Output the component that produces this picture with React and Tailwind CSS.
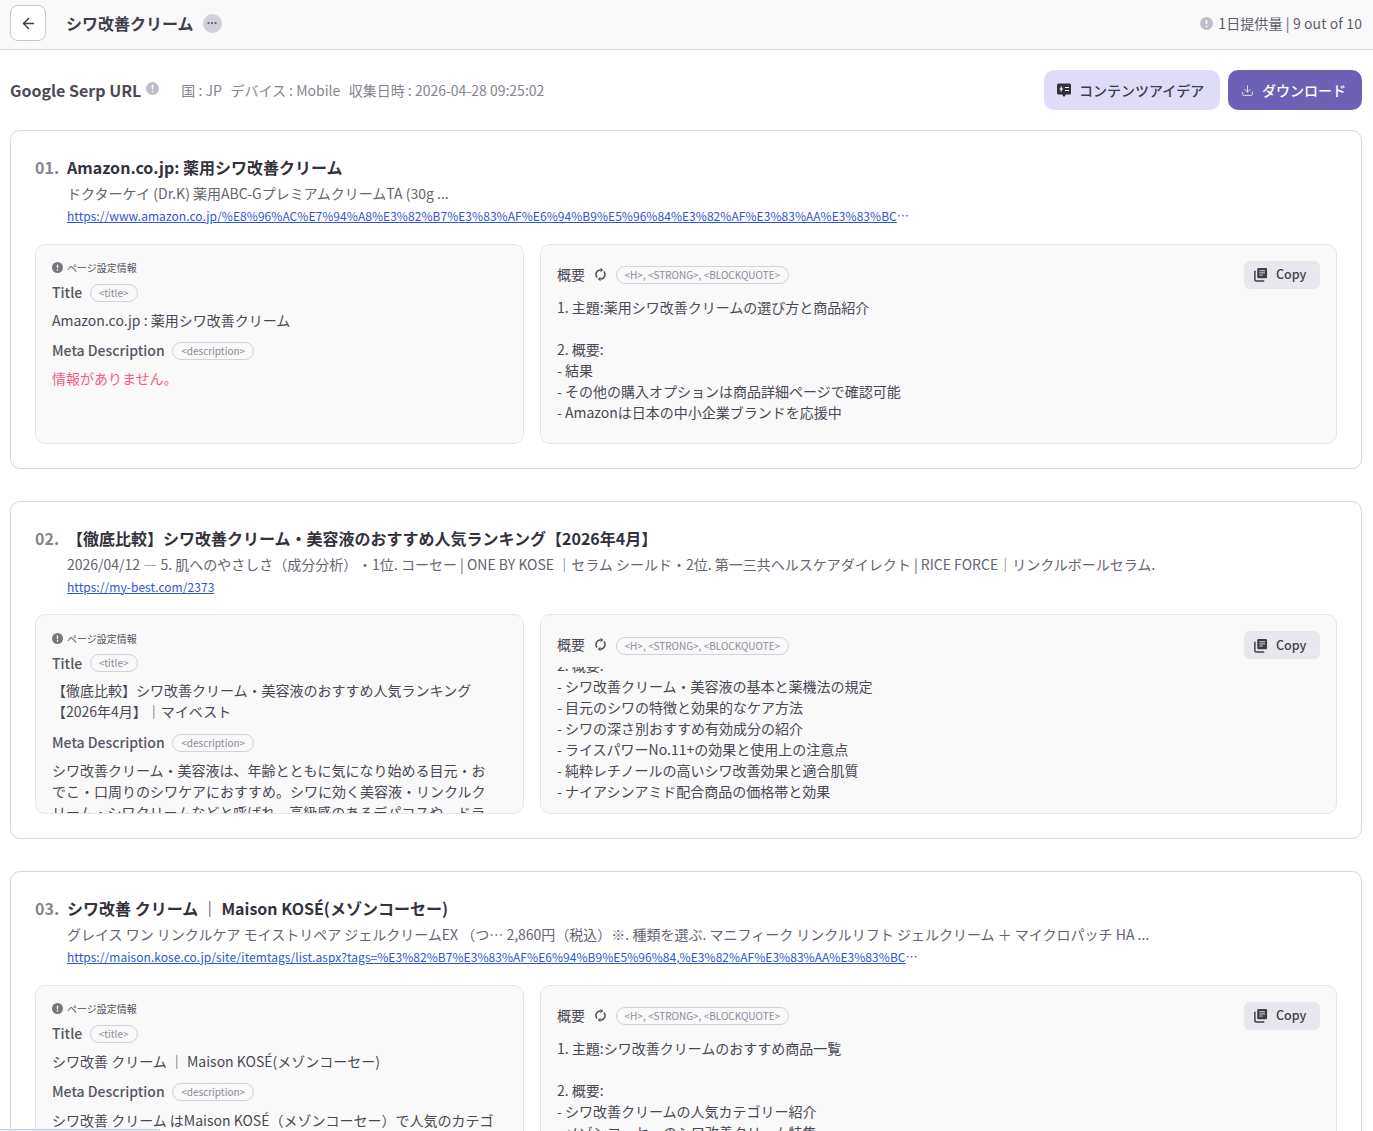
import { ArrowLeft, Download, Ellipsis } from "lucide-react";

const results = [
  {
    no: "01.",
    title: "Amazon.co.jp: 薬用シワ改善クリーム",
    snippet: "ドクターケイ (Dr.K) 薬用ABC-GプレミアムクリームTA (30g ...",
    url: "https://www.amazon.co.jp/%E8%96%AC%E7%94%A8%E3%82%B7%E3%83%AF%E6%94%B9%E5%96%84%E3%82%AF%E3%83%AA%E3%83%BC%E3%83%A0/s?k=%E8%96%AC%E7%94%A8",
    urlWidth: "max-w-[843px]",
    metaTitle: ["Amazon.co.jp : 薬用シワ改善クリーム"],
    description: null,
    summaryOffset: "mt-0",
    summary: ["1. 主題:薬用シワ改善クリームの選び方と商品紹介", "", "2. 概要:", "- 結果", "- その他の購入オプションは商品詳細ページで確認可能", "- Amazonは日本の中小企業ブランドを応援中"],
  },
  {
    no: "02.",
    title: "【徹底比較】シワ改善クリーム・美容液のおすすめ人気ランキング【2026年4月】",
    snippet: "2026/04/12 ― 5. 肌へのやさしさ（成分分析）\u200a・1位. コーセー | ONE BY KOSE ｜セラム シールド・2位. 第一三共ヘルスケアダイレクト | RICE FORCE｜リンクルボールセラム.",
    url: "https://my-best.com/2373",
    urlWidth: "max-w-[843px]",
    metaTitle: ["【徹底比較】シワ改善クリーム・美容液のおすすめ人気ランキング", "【2026年4月】｜マイベスト"],
    description: "シワ改善クリーム・美容液は、年齢とともに気になり始める目元・おでこ・口周りのシワケアにおすすめ。シワに効く美容液・リンクルクリーム・シワクリームなどと呼ばれ、高級感のあるデパコスや、ドラ",
    summaryOffset: "-mt-[12px]",
    summary: ["2. 概要:", "- シワ改善クリーム・美容液の基本と薬機法の規定", "- 目元のシワの特徴と効果的なケア方法", "- シワの深さ別おすすめ有効成分の紹介", "- ライスパワーNo.11+の効果と使用上の注意点", "- 純粋レチノールの高いシワ改善効果と適合肌質", "- ナイアシンアミド配合商品の価格帯と効果"],
  },
  {
    no: "03.",
    title: "シワ改善 クリーム ｜ Maison KOSÉ(メゾンコーセー)",
    snippet: "グレイス ワン リンクルケア モイストリペア ジェルクリームEX （つ⋯ 2,860円（税込）※. 種類を選ぶ. マニフィーク リンクルリフト ジェルクリーム ＋ マイクロパッチ HA ...",
    url: "https://maison.kose.co.jp/site/itemtags/list.aspx?tags=%E3%82%B7%E3%83%AF%E6%94%B9%E5%96%84,%E3%82%AF%E3%83%AA%E3%83%BC%E3%83%A0%E3%83%A0",
    urlWidth: "max-w-[852px]",
    metaTitle: ["シワ改善 クリーム ｜ Maison KOSÉ(メゾンコーセー)"],
    description: "シワ改善 クリーム はMaison KOSÉ（メゾンコーセー）で人気のカテゴリーです。",
    summaryOffset: "mt-0",
    summary: ["1. 主題:シワ改善クリームのおすすめ商品一覧", "", "2. 概要:", "- シワ改善クリームの人気カテゴリー紹介", "- メゾンコーセーのシワ改善クリーム特集"],
  },
];

function AlertDot({ className }) {
  return (
    <svg viewBox="0 0 16 16" className={className}>
      <circle cx="8" cy="8" r="8" fill="currentColor" />
      <rect x="7" y="3.5" width="2" height="5.5" rx="1" fill="#fff" />
      <circle cx="8" cy="11.5" r="1.15" fill="#fff" />
    </svg>
  );
}

function SyncIcon() {
  return (
    <svg viewBox="0 0 16 16" className="ml-[8px] mt-[3px] h-[15px] w-[15px] shrink-0 text-[#55545f]" fill="none">
      <path d="M8 3.2a4.8 4.8 0 0 0-3.6 8" stroke="currentColor" strokeWidth="1.6" />
      <path d="M8 .8v4.8l3-2.4z" fill="currentColor" />
      <path d="M8 12.8a4.8 4.8 0 0 0 3.6-8" stroke="currentColor" strokeWidth="1.6" />
      <path d="M8 10.4v4.8l-3-2.4z" fill="currentColor" />
    </svg>
  );
}

function TagPill({ children, className = "" }) {
  return (
    <span className={`ml-[7.5px] inline-flex h-[18px] items-center rounded-full border border-[#d3d1de] px-2 text-[10px] font-normal leading-none text-[#8b8a99] ${className}`}>
      {children}
    </span>
  );
}

function MetaPanel({ item }) {
  return (
    <div className="h-[200px] overflow-hidden rounded-[10px] border border-[#e6e5ec] bg-[#f9f9fa] px-4 pt-[16px]">
      <div className="flex h-[14px] items-center gap-1 text-[10px] text-[#55545f]">
        <AlertDot className="h-[11px] w-[11px] text-[#77767f]" />
        <span>ページ設定情報</span>
      </div>
      <div className="mt-[7px] flex h-[21px] items-center text-sm font-medium text-[#565562]">
        Title<TagPill className="mt-[1px]">&lt;title&gt;</TagPill>
      </div>
      <div className="mt-[7px] text-sm leading-[21px] text-[#494853]">
        {item.metaTitle.map((line) => (
          <div key={line}>{line}</div>
        ))}
      </div>
      <div className="mt-[9px] flex h-[21px] items-center text-sm font-medium text-[#565562]">
        Meta Description<TagPill className="mt-[2px]">&lt;description&gt;</TagPill>
      </div>
      {item.description ? (
        <p className="mt-[8px] w-[442px] text-sm leading-[21px] text-[#494853]">{item.description}</p>
      ) : (
        <p className="mt-[7px] text-sm leading-[21px] text-[#f2617f]">情報がありません。</p>
      )}
    </div>
  );
}

function SummaryPanel({ item }) {
  return (
    <div className="relative flex h-[200px] flex-col overflow-hidden rounded-[10px] border border-[#e6e5ec] bg-[#f9f9fa] pl-4 pr-4">
      <div className="flex h-[52px] shrink-0 items-start pt-[19px]">
        <span className="text-sm leading-[21px] text-[#494853]">概要</span>
        <SyncIcon />
        <span className="mt-[1px] flex h-[21px] items-center">
          <TagPill>&lt;H&gt;, &lt;STRONG&gt;, &lt;BLOCKQUOTE&gt;</TagPill>
        </span>
      </div>
      <button className="absolute right-4 top-4 flex h-7 w-[76px] items-center gap-2 rounded-md bg-[#e8e7ed] pl-[9px] text-[12.5px] font-medium text-[#3e3d48]">
        <svg viewBox="0 0 16 16" className="h-[15px] w-[15px]" fill="none">
          <rect x="4.5" y="1" width="10.5" height="11" rx="1.2" fill="#3e3d48" />
          <path d="M6.8 4h6M6.8 6.3h6M6.8 8.6h3.5" stroke="#e8e7ed" strokeWidth="1" />
          <path d="M2 4v9.5A1.5 1.5 0 0 0 3.5 15H12" stroke="#3e3d48" strokeWidth="1.6" />
        </svg>
        Copy
      </button>
      <div className="min-h-0 flex-1 overflow-hidden">
        <div className={`${item.summaryOffset} text-sm leading-[21px] text-[#494853]`}>
          {item.summary.map((line, i) => (
            <div key={i} className="h-[21px]">{line}</div>
          ))}
        </div>
      </div>
    </div>
  );
}

function ResultCard({ item }) {
  return (
    <section className="rounded-[10px] border border-[#d8d7e0] bg-white px-6 pb-6 pt-[23px]">
      <div className="flex text-base font-bold leading-[26px] text-[#33323c]">
        <span className="w-8 shrink-0 text-[#85848f]">{item.no}</span>
        <h2>{item.title}</h2>
      </div>
      <div className="ml-8 mt-[3px] text-sm leading-[21px] text-[#65646f]">{item.snippet}</div>
      <div className="ml-8 mt-[2px] h-[19px]">
        <a href="#" className={`block ${item.urlWidth} truncate text-xs leading-[19px] tracking-[0.05px] text-[#2f55d4] underline`}>
          {item.url}
        </a>
      </div>
      <div className="mt-[18.5px] grid grid-cols-[489px_797px] gap-4">
        <MetaPanel item={item} />
        <SummaryPanel item={item} />
      </div>
    </section>
  );
}

export default function App() {
  return (
    <div className="relative h-[1131px] overflow-hidden bg-white font-['Noto_Sans_CJK_JP',sans-serif]">
      <header className="flex h-[50px] items-center border-b border-[#d9d8de] bg-[#f9f9fa] pb-[3px] pl-[10px] pr-[11px]">
        <button className="flex h-9 w-9 items-center justify-center rounded-lg border border-[#c9c8d4] bg-white text-[#3a3944]">
          <ArrowLeft className="h-[17px] w-[17px]" strokeWidth={2} />
        </button>
        <h1 className="ml-5 text-base font-bold text-[#3f3e49]">シワ改善クリーム</h1>
        <span className="ml-[9px] flex h-[19px] w-[19px] items-center justify-center rounded-full bg-[#d2d0da] text-[#5a5965]">
          <Ellipsis className="h-3 w-3" strokeWidth={2.5} />
        </span>
        <div className="ml-auto flex items-center gap-[5px] text-sm tracking-[0.1px] text-[#5e5d69]">
          <AlertDot className="h-[13px] w-[13px] text-[#bfbdca]" />
          <span>1日提供量 | 9 out of 10</span>
        </div>
      </header>

      <main className="pl-[10px] pr-[11px]">
        <div className="flex h-[80px] items-center">
          <h2 className="text-base font-bold text-[#4b4a55]">Google Serp URL</h2>
          <AlertDot className="ml-[5px] mb-1 h-[13px] w-[13px] text-[#bfbdca]" />
          <div className="ml-[22px] flex gap-[8.5px] text-sm text-[#85848f]">
            <span>国 : JP</span>
            <span>デバイス : Mobile</span>
            <span>収集日時 : 2026-04-28 09:25:02</span>
          </div>
          <div className="ml-auto flex gap-2">
            <button className="flex h-10 w-[176px] items-center gap-[7px] rounded-[10px] bg-[#dedcf6] pl-[12px] text-sm font-medium text-[#3f3e49]">
              <svg viewBox="0 0 16 16" className="h-4 w-4">
                <path d="M2.5 1.5h11A1.5 1.5 0 0 1 15 3v8a1.5 1.5 0 0 1-1.5 1.5H10L8 15l-2-2.5H2.5A1.5 1.5 0 0 1 1 11V3a1.5 1.5 0 0 1 1.5-1.5z" fill="#33323c" />
                <path d="M3.5 7h3.5M5.2 4.5v5M9 5.5h4M9 8.5h4" stroke="#fff" strokeWidth="1.2" />
              </svg>
              コンテンツアイデア
            </button>
            <button className="flex h-10 w-[134px] items-center gap-2 rounded-[10px] bg-[#6c61b4] pl-[13px] text-sm font-medium text-white">
              <Download className="h-[13px] w-[13px] opacity-80" strokeWidth={1.75} />
              ダウンロード
            </button>
          </div>
        </div>

        <div className="flex flex-col gap-8">
          {results.map((item) => (
            <ResultCard key={item.no} item={item} />
          ))}
        </div>
      </main>

      <div className="absolute bottom-0 left-0 h-[2px] w-[160px] rounded-tr-sm border-r border-t border-[#c9c8d4] bg-[#e8f0fe]" />
    </div>
  );
}
